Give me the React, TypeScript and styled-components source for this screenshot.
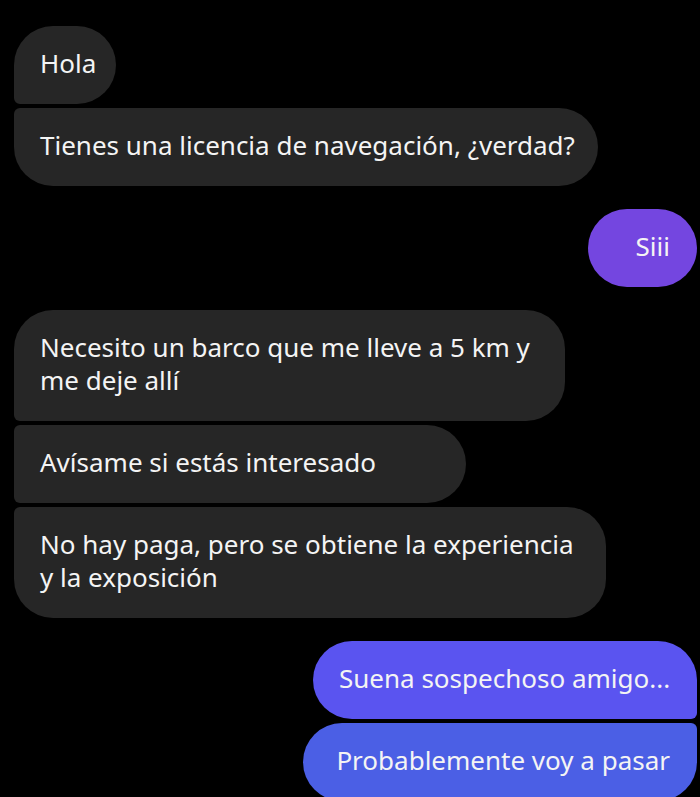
import React from "react";
import styled, { createGlobalStyle } from "styled-components";

const Global = createGlobalStyle`
  html, body { margin: 0; padding: 0; background: #000; }
  body { font-family: "Noto Sans", "Open Sans", sans-serif; }
`;

const Screen = styled.div`
  width: 700px;
  height: 797px;
  overflow: hidden;
  background: #000;
  box-sizing: border-box;
  padding: 26px 3px 0 14px;
  display: flex;
  flex-direction: column;
  gap: 23px;
`;

const Group = styled.div<{ $mine?: boolean }>`
  display: flex;
  flex-direction: column;
  gap: 4px;
  align-items: ${(p) => (p.$mine ? "flex-end" : "flex-start")};
`;

type Pos = "single" | "first" | "middle" | "last";

const big = "39px";
const small = "6px";

function radius(pos: Pos, mine: boolean) {
  const top = pos === "single" || pos === "first" ? big : small;
  const bottom = pos === "single" || pos === "last" ? big : small;
  return mine
    ? `${big} ${top} ${bottom} ${big}`
    : `${top} ${big} ${big} ${bottom}`;
}

const Bubble = styled.div<{ $pos: Pos; $mine?: boolean; $bg: string; $w?: number }>`
  box-sizing: border-box;
  background: ${(p) => p.$bg};
  color: #f4f4f4;
  font-size: 26px;
  line-height: 33px;
  padding: 21px ${(p) => (p.$mine ? "27px" : "22px")} 24px 26px;
  border-radius: ${(p) => radius(p.$pos, !!p.$mine)};
  width: ${(p) => (p.$w ? `${p.$w}px` : "fit-content")};
  text-align: ${(p) => (p.$mine ? "right" : "left")};
  white-space: nowrap;
`;

const GRAY = "#262626";

export default function App() {
  return (
    <>
      <Global />
      <Screen>
        <Group>
          <Bubble $bg={GRAY} $pos="first" $w={102}>Hola</Bubble>
          <Bubble $bg={GRAY} $pos="last" $w={584}>
            Tienes una licencia de navegación, ¿verdad?
          </Bubble>
        </Group>
        <Group $mine>
          <Bubble $mine $bg="#7446e0" $pos="single" $w={109}>Siii</Bubble>
        </Group>
        <Group>
          <Bubble $bg={GRAY} $pos="first" $w={551}>
            Necesito un barco que me lleve a 5 km y<br />me deje allí
          </Bubble>
          <Bubble $bg={GRAY} $pos="middle" $w={452}>Avísame si estás interesado</Bubble>
          <Bubble $bg={GRAY} $pos="last" $w={592}>
            No hay paga, pero se obtiene la experiencia
            <br />y la exposición
          </Bubble>
        </Group>
        <Group $mine>
          <Bubble $mine $bg="#5a54f0" $pos="first" $w={384}>Suena sospechoso amigo...</Bubble>
          <Bubble $mine $bg="#4b5fe5" $pos="last" $w={394}>Probablemente voy a pasar</Bubble>
        </Group>
      </Screen>
    </>
  );
}
